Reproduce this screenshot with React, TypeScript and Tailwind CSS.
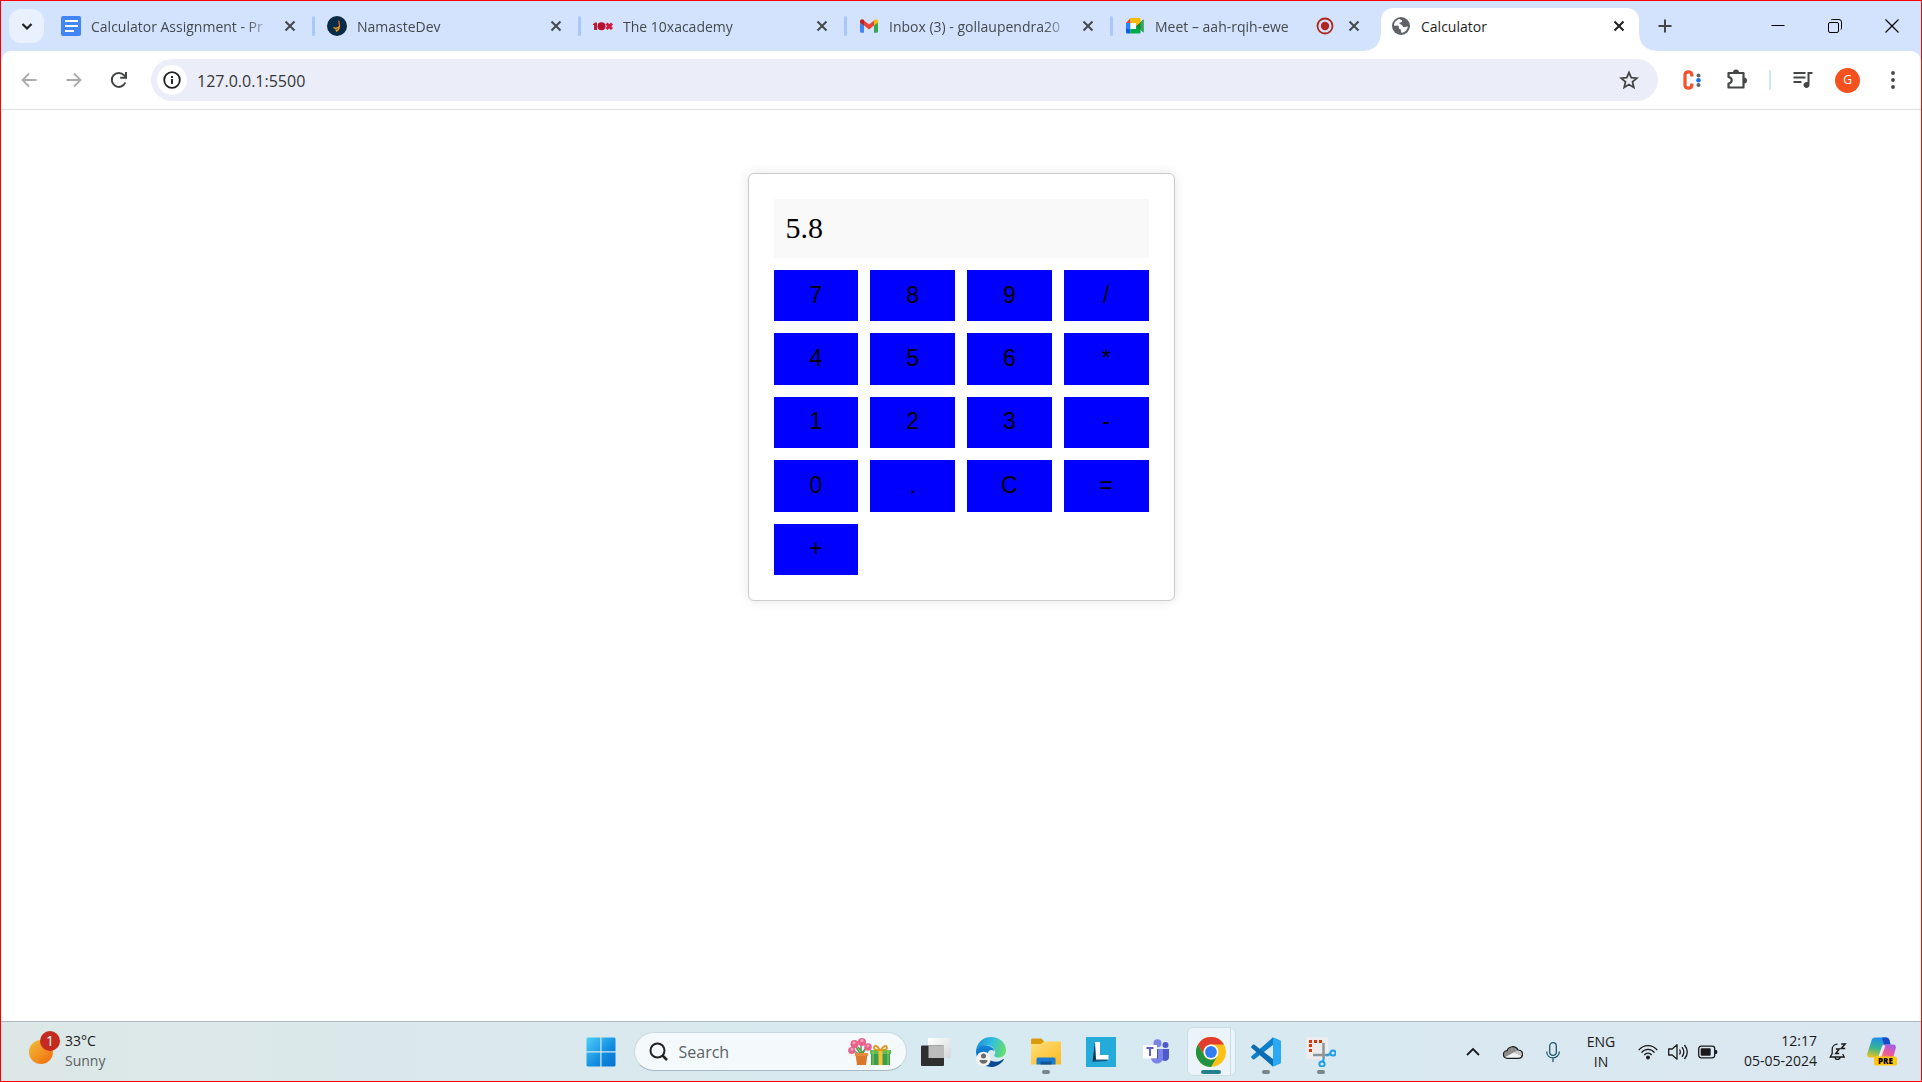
import React, { useState } from "react";

type IconProps = { className?: string };

/* ---------- Tab favicons ---------- */

const DocsIcon = () => (
  <svg viewBox="0 0 20 20" className="size-5 shrink-0" aria-hidden="true">
    <rect width="20" height="20" rx="2" fill="#4285f4" />
    <path d="M4 5h13M4 10h13M4 15h9" stroke="#fff" strokeWidth="2.2" />
  </svg>
);

const NamasteIcon = () => (
  <svg viewBox="0 0 20 20" className="size-5 shrink-0" aria-hidden="true">
    <circle cx="10" cy="10" r="10" fill="#0a2b45" />
    <path d="M12 4.500c-.6 2 1 4 .4 6" stroke="#e0643c" strokeWidth="1.300" fill="none" />
    <path d="M6.500 11.500c2 1.300 4 .8 5.800-.8-.1 1.800-.8 3-2 4" stroke="#f39a1f" strokeWidth="1.400" fill="none" />
    <path d="M8 13.500l3.600.2-2 2.200z" fill="#f5a623" />
  </svg>
);

const TenXIcon = () => (
  <svg viewBox="0 0 20 20" className="size-5 shrink-0" aria-hidden="true">
    <path d="M0 8l2-1.500h2V14H1V9H0z" fill="#c01c3a" />
    <circle cx="8.500" cy="10.200" r="4" fill="#b8102f" />
    <path d="M13.500 7.500l5.500 5.500M19 7.500L13.500 13" stroke="#d0183a" strokeWidth="3" />
  </svg>
);

const GmailIcon = () => (
  <svg viewBox="0 0 20 20" className="size-5 shrink-0" aria-hidden="true">
    <path d="M1 6v9.500c0 .8.500 1.200 1.200 1.200H5V8.500z" fill="#4285f4" />
    <path d="M19 6v9.500c0 .8-.500 1.200-1.200 1.200H15V8.500z" fill="#34a853" />
    <path d="M5 4.600l5 3.800 5-3.800v5L10 13.400 5 9.600z" fill="#ea4335" />
    <path d="M1 5.300C1 3.300 3.200 2.600 4.600 3.700L5 4v5.600L1 6.600z" fill="#c5221f" />
    <path d="M19 5.300c0-2-2.200-2.700-3.600-1.600L15 4v5.600l4-3z" fill="#fbbc04" />
  </svg>
);

const MeetIcon = () => (
  <svg viewBox="0 0 20 20" className="size-5 shrink-0" aria-hidden="true">
    <path d="M1 7h4.500v6H1z" fill="#2684fc" />
    <path d="M1 7l4.500-5v5z" fill="#ea4335" />
    <path d="M5.500 2H14c1 0 1.500.5 1.500 1.500V8L11 10V7H5.500z" fill="#ffba00" />
    <path d="M1 13h4.500v4.500H2.500c-1 0-1.500-.5-1.500-1.500z" fill="#0066da" />
    <path d="M5.500 7H11v6H5.500z" fill="#fff" />
    <path d="M5.500 13H11v-3l4.500-2v8c0 1-.5 1.500-1.500 1.500H5.500z" fill="#00ac47" />
    <path d="M11.500 10l7-6.500v13z" fill="#188038" />
    <path d="M15.500 6.300l3-2.800v13l-3-2.800z" fill="#34a853" />
  </svg>
);

const GlobeIcon = () => (
  <svg viewBox="0 0 20 20" className="size-5 shrink-0" aria-hidden="true">
    <circle cx="10" cy="10" r="9" fill="#5f6368" />
    <path d="M3 9.500C3.200 6 5.500 3.600 8.800 3c.8 1.200 2.700 1 2.300 2.400-.3 1.100-2.600.8-2.700 2-.1 1 1.500.6 2.500 1.500.9.800.6 2 2 2.200 1.500.3 2.600-.6 4-.6-.4 2.800-2.300 5.200-5.200 6.200l-1.500-.1c-.7-.6.300-1.600-.2-2.500-.5-.9-1.700-.8-2.100-1.800-.4-1.200.5-2-.6-2.600C6 9.100 4.600 10.400 3 9.500z" fill="#fff" />
  </svg>
);

const CloseX = ({ className = "" }: IconProps) => (
  <svg viewBox="0 0 20 20" className={`size-5 ${className}`} aria-hidden="true">
    <path d="M5.500 5.500l9 9M14.500 5.500l-9 9" stroke="currentColor" strokeWidth="2" />
  </svg>
);

/* ---------- Browser chrome ---------- */

type TabProps = { title: string; icon: React.ReactNode; recording?: boolean };

const Tab = ({ title, icon, recording }: TabProps) => (
  <div className="flex w-[266px] shrink-0 items-center pl-3 text-[#45494e]">
    {icon}
    <a
      href="#"
      className="ml-2.5 flex-1 overflow-hidden pt-0.5 text-sm/5 whitespace-nowrap [mask-image:linear-gradient(to_right,black_86%,transparent)]"
    >
      {title}
    </a>
    {recording && (
      <svg viewBox="0 0 18 18" className="mr-2.5 size-[18px]" role="img" aria-label="Recording">
        <circle cx="9" cy="9" r="7.500" fill="none" stroke="#b3261e" strokeWidth="1.800" />
        <circle cx="9" cy="9" r="4.200" fill="#b3261e" />
      </svg>
    )}
    <button aria-label={`Close ${title}`} className={recording ? "" : "ml-2"}>
      <CloseX />
    </button>
    <span className="ml-3 h-5 w-[3px] rounded-full bg-[#a8c7fa]" />
  </div>
);

const TabStrip = () => (
  <header className="flex h-[50px] items-stretch bg-[#d3e3fd]">
    <button
      aria-label="Search tabs"
      className="my-2 mr-[5px] ml-2 flex w-[35px] shrink-0 items-center justify-center rounded-xl bg-[#e9f1fe] text-[#1f1f1f]"
    >
      <svg viewBox="0 0 20 20" className="size-5" aria-hidden="true">
        <path d="M5.500 8l4.500 4.500L14.500 8" fill="none" stroke="currentColor" strokeWidth="2.200" />
      </svg>
    </button>
    <nav className="flex min-w-0" aria-label="Tabs">
      <Tab title="Calculator Assignment - Pr" icon={<DocsIcon />} />
      <Tab title="NamasteDev" icon={<NamasteIcon />} />
      <Tab title="The 10xacademy" icon={<TenXIcon />} />
      <Tab title="Inbox (3) - gollaupendra20" icon={<GmailIcon />} />
      <div className="flex [&>div>span:last-child]:bg-transparent">
        <Tab title="Meet – aah-rqih-ewe" icon={<MeetIcon />} recording />
      </div>
      <div className="relative mt-[7px] ml-0.5 flex w-[258px] shrink-0 items-center rounded-t-xl bg-white pr-2.5 pb-[7px] pl-2.5 text-[#1f1f1f]">
        <span className="absolute bottom-0 -left-4 size-4 bg-[radial-gradient(circle_at_0_0,transparent_15px,white_16px)]" />
        <span className="absolute -right-4 bottom-0 size-4 bg-[radial-gradient(circle_at_100%_0,transparent_15px,white_16px)]" />
        <GlobeIcon />
        <a href="#" className="ml-2.5 flex-1 pt-0.5 text-sm/5">
          Calculator
        </a>
        <button aria-label="Close Calculator">
          <CloseX />
        </button>
      </div>
    </nav>
    <button aria-label="New tab" className="ml-3 flex w-7 items-center justify-center text-[#444746]">
      <svg viewBox="0 0 16 16" className="size-4" aria-hidden="true">
        <path d="M8 1.500v13M1.500 8h13" stroke="currentColor" strokeWidth="2" />
      </svg>
    </button>
    <div className="ml-auto flex pr-px text-black">
      <button aria-label="Minimize" className="flex w-[57px] items-center justify-center">
        <svg viewBox="0 0 14 14" className="size-3.5" aria-hidden="true">
          <path d="M.500 6.500h13" stroke="currentColor" />
        </svg>
      </button>
      <button aria-label="Restore" className="flex w-[57px] items-center justify-center">
        <svg viewBox="0 0 14 14" className="size-3.5" fill="none" stroke="currentColor" aria-hidden="true">
          <rect x=".500" y="3.500" width="10" height="10" rx="1.500" />
          <path d="M3 1c.4-.4.8-.5 1.500-.5H11A2.500 2.500 0 0 1 13.500 3v6c0 .8-.2 1.200-.6 1.600" />
        </svg>
      </button>
      <button aria-label="Close window" className="flex w-[57px] items-center justify-center">
        <svg viewBox="0 0 14 14" className="size-3.5" aria-hidden="true">
          <path d="M.500.500l13 13M13.500.500l-13 13" stroke="currentColor" strokeWidth="1.200" />
        </svg>
      </button>
    </div>
  </header>
);

const Toolbar = () => (
  <div className="bg-[#d3e3fd]">
    <div className="flex h-[59px] items-center rounded-t-[10px] border-b border-[#dee1e3] bg-white pr-1.5 pl-[5px] text-[#444746]">
      <button aria-label="Back" className="flex w-[45px] shrink-0 justify-center text-[#a9abab]">
        <svg viewBox="0 0 16 16" className="size-4" fill="none" stroke="currentColor" strokeWidth="1.800" aria-hidden="true">
          <path d="M15.500 8H2M8 1.500L1.500 8 8 14.500" />
        </svg>
      </button>
      <button aria-label="Forward" className="flex w-[45px] shrink-0 justify-center text-[#a9abab]">
        <svg viewBox="0 0 16 16" className="size-4" fill="none" stroke="currentColor" strokeWidth="1.800" aria-hidden="true">
          <path d="M.500 8H14M8 1.500L14.500 8 8 14.500" />
        </svg>
      </button>
      <button aria-label="Reload" className="flex w-[45px] shrink-0 justify-center">
        <svg viewBox="0 0 18 18" className="size-[18px]" fill="none" stroke="currentColor" strokeWidth="2" aria-hidden="true">
          <path d="M15.300 11.500A7 7 0 1 1 14 4.200l2 2" />
          <path d="M16 1v5.800h-5.800" />
        </svg>
      </button>
      <div className="ml-2.5 flex h-[42px] flex-1 items-center rounded-full bg-[#ebeef8] pr-[19px] pl-1.5">
        <button aria-label="View site information" className="flex size-[30px] items-center justify-center rounded-full bg-white text-[#1f1f1f]">
          <svg viewBox="0 0 18 18" className="size-[18px]" aria-hidden="true">
            <circle cx="9" cy="9" r="7.800" fill="none" stroke="currentColor" strokeWidth="1.800" />
            <path d="M9 8v5M9 5v2" stroke="currentColor" strokeWidth="1.900" />
          </svg>
        </button>
        <input
          aria-label="Address bar"
          defaultValue="127.0.0.1:5500"
          className="ml-2.5 min-w-0 flex-1 bg-transparent pt-0.5 text-base text-[#33363a] outline-none"
        />
        <button aria-label="Bookmark this tab">
          <svg viewBox="0 0 20 20" className="size-5" fill="none" stroke="currentColor" strokeWidth="1.800" aria-hidden="true">
            <path d="M10 2.500l2.200 5.200 5.600.5-4.300 3.700 1.300 5.500L10 14.500l-4.800 2.900 1.300-5.500L2.200 8.200l5.600-.5z" />
          </svg>
        </button>
      </div>
      <div className="flex items-center">
        <button aria-label="Extension" className="ml-[11px] flex w-[45px] justify-center">
          <svg viewBox="0 0 20 20" className="size-5" aria-hidden="true">
            <path d="M9.800 6.500V5c0-2-1.200-3.200-3.300-3.200S3 3 3 5v10c0 2 1.300 3.200 3.500 3.200s3.300-1.200 3.300-3.200v-1.500" fill="none" stroke="#f4512c" strokeWidth="3.200" />
            <circle cx="16.500" cy="5.500" r="2" fill="#5f6368" />
            <circle cx="16.500" cy="10.200" r="2.300" fill="#1a73e8" />
            <circle cx="16.500" cy="15" r="2" fill="#5f6368" />
          </svg>
        </button>
        <button aria-label="Extensions" className="flex w-[45px] justify-center">
          <svg viewBox="0 0 22 22" className="size-[22px]" aria-hidden="true">
            <path d="M2.500 4h15v14.500h-15v-4a3.200 3.200 0 0 0 0-6.400z" fill="none" stroke="currentColor" strokeWidth="2.200" strokeLinejoin="round" />
            <path d="M7 3.500a3 3 0 0 1 6 0zM18 8.500a3 3 0 0 1 0 6z" fill="currentColor" />
          </svg>
        </button>
        <span className="mr-[9px] ml-[10px] h-5 w-0.5 bg-[#d3e3fd]" />
        <button aria-label="Media controls" className="flex w-[45px] justify-center">
          <svg viewBox="2.500 3 20 18" className="h-[18px] w-5" fill="currentColor" aria-hidden="true">
            <path d="M15 4H3v2h12V4zm0 4.500H3v2h12v-2zM3 15h8v-2H3v2zM17 4v10.180c-.31-.11-.65-.18-1-.18-1.660 0-3 1.340-3 3s1.340 3 3 3 3-1.340 3-3V6h3V4h-5z" />
          </svg>
        </button>
        <button aria-label="Profile" className="flex w-[45px] justify-center">
          <span className="flex size-[25px] items-center justify-center rounded-full bg-[#f4511e] text-xs text-white">G</span>
        </button>
        <button aria-label="Menu" className="flex w-[45px] justify-center">
          <svg viewBox="0 0 18 18" className="size-[18px]" fill="currentColor" aria-hidden="true">
            <circle cx="9" cy="2" r="1.900" />
            <circle cx="9" cy="9" r="1.900" />
            <circle cx="9" cy="16" r="1.900" />
          </svg>
        </button>
      </div>
    </div>
  </div>
);

/* ---------- Calculator ---------- */

const KEYS = ["7", "8", "9", "/", "4", "5", "6", "*", "1", "2", "3", "-", "0", ".", "C", "=", "+"];

const evaluate = (expression: string): string => {
  const tokens = expression.match(/\d*\.?\d+|[-+*/]/g) ?? [];
  const terms: number[] = [];
  let operator = "+";
  for (const token of tokens) {
    if (/^[-+*/]$/.test(token)) {
      operator = token;
      continue;
    }
    const value = Number(token);
    if (operator === "*") terms.push((terms.pop() ?? 0) * value);
    else if (operator === "/") terms.push((terms.pop() ?? 0) / value);
    else terms.push(operator === "-" ? -value : value);
  }
  return String(terms.reduce((sum, term) => sum + term, 0));
};

const Calculator = () => {
  const [display, setDisplay] = useState("5.8");

  const press = (key: string) => {
    if (key === "C") setDisplay("");
    else if (key === "=") setDisplay(evaluate(display));
    else setDisplay(display + key);
  };

  return (
    <section
      aria-label="Calculator"
      className="mt-[63px] w-full max-w-[427px] rounded-md border border-[#ccc] bg-white p-[25px] shadow-[0_0_12px_rgba(0,0,0,0.1)]"
    >
      <output className="mb-3 block min-h-[59px] bg-[#f9f9f9] px-3 py-3 font-['Liberation_Serif',serif] text-[30px]/[33px] text-black">
        {display}
      </output>
      <div className="grid h-[305px] grid-cols-4 grid-rows-5 gap-3">
        {KEYS.map((key) => (
          <button
            key={key}
            onClick={() => press(key)}
            className="bg-[#0000ff] pb-0.5 font-['Liberation_Sans',sans-serif] text-[23px]/[26px] text-black"
          >
            {key}
          </button>
        ))}
      </div>
    </section>
  );
};

/* ---------- Taskbar icons ---------- */

const StartIcon = () => (
  <svg viewBox="0 0 30 30" className="size-[30px]" aria-hidden="true">
    <defs>
      <linearGradient id="start" x1="0" y1="0" x2="1" y2="1">
        <stop offset="0" stopColor="#4fd0fb" />
        <stop offset=".6" stopColor="#118be0" />
        <stop offset="1" stopColor="#0573cf" />
      </linearGradient>
    </defs>
    <path d="M1.500.500H14.300V14.300H.500V1.500zM15.500.500H28.500l1 1V14.300H15.500zM.500 15.500H14.300V29.500H1.500l-1-1zM15.500 15.500H29.500V28.500l-1 1H15.500z" fill="url(#start)" />
  </svg>
);

const GiftIcon = () => (
  <svg viewBox="0 0 44 28" className="h-7 w-11" aria-hidden="true">
    <path d="M8 9l5 8M19 8l-5 9M13 5v12M5 12l7 5M10 9l4 5M17 11l-3 4" stroke="#5a9a4a" strokeWidth="1.500" />
    <path d="M7.500 16h12l-1.500 11H9z" fill="#d9772b" />
    <path d="M7 15h13v3H7z" fill="#e88a3c" />
    <g fill="#e9608c">
      <circle cx="14" cy="4" r="4" />
      <circle cx="6.500" cy="6" r="4" />
      <circle cx="20" cy="9" r="3.800" />
      <circle cx="3.800" cy="12.500" r="3.600" />
    </g>
    <g fill="#f7a5bf">
      <circle cx="14" cy="2.500" r="1.600" />
      <circle cx="6" cy="4.800" r="1.500" />
      <circle cx="20" cy="7.800" r="1.400" />
      <circle cx="4" cy="11.500" r="1.400" />
    </g>
    <path d="M23 15h19v12H23z" fill="#3d9e49" />
    <path d="M22 12h21v4H22z" fill="#62bb55" />
    <path d="M25 12v15M40 12v15" stroke="#8bd06c" />
    <path d="M30.500 12h4v15h-4z" fill="#f5c33b" />
    <path d="M32 12c-3-5-6-5-6-2 0 1.500 3 2 6 2zM33 12c3-5 6-5 6-2 0 1.500-3 2-6 2z" fill="none" stroke="#dc9a20" strokeWidth="1.800" />
  </svg>
);

const TaskViewIcon = () => (
  <svg viewBox="0 0 30 28" className="h-7 w-[30px]" aria-hidden="true">
    <defs>
      <linearGradient id="tv" x1="0" y1="0" x2="1" y2="1">
        <stop offset="0" stopColor="#fff" />
        <stop offset="1" stopColor="#d5d7d8" />
      </linearGradient>
    </defs>
    <rect x="7" width="23" height="20" rx="1" fill="url(#tv)" />
    <rect y="7.500" width="23" height="20.500" rx="1" fill="#2f2f2f" />
    <path d="M7.500 7.500H23V20H7.500z" fill="#bcbcbc" />
  </svg>
);

const EdgeIcon = () => (
  <svg viewBox="0 0 30 30" className="size-[30px]" aria-hidden="true">
    <defs>
      <linearGradient id="edgeTop" x1="0" y1=".3" x2="1" y2=".5">
        <stop offset="0" stopColor="#1b8fd8" />
        <stop offset=".5" stopColor="#30bfe0" />
        <stop offset="1" stopColor="#66dd6a" />
      </linearGradient>
      <linearGradient id="edgeBody" x1="0" y1="0" x2="0" y2="1">
        <stop offset="0" stopColor="#1486d8" />
        <stop offset="1" stopColor="#0a5cad" />
      </linearGradient>
    </defs>
    <path d="M0 14C.6 6 7 0 15 0c8.500 0 15 6 15 13 0 5-3.500 7.500-7.500 7.500-3 0-5-1.300-4-3 .7-1 .8-2 .5-3C18 10 13 7.500 8.500 8.500 4.500 9.200 1.500 11 0 14z" fill="url(#edgeTop)" />
    <path d="M0 14c1.500-4 6-6.500 11-5.500 4 .7 7 3 7.300 5.500-3-2-6.800-.8-6.800 4 0 5 4 9 9 9-2 2-4.500 3-7 2.700C6 29 0 23 0 14z" fill="url(#edgeBody)" />
    <path d="M11.500 18c0 5 5.500 7.500 10.500 6.500 2-.4 3.800-1.300 5-2.300.6-.4 1 .1.600.7C24.500 27.500 19.500 30 14.500 30c-2.500-2-4-7-3-12z" fill="#0c4a90" />
    <circle cx="7.500" cy="22" r="7.300" fill="#f3f3f3" />
    <circle cx="7.500" cy="19" r="2.500" fill="#6b6b6b" />
    <path d="M3.500 23h8c0 5-8 5-8 0z" fill="#6b6b6b" />
  </svg>
);

const FolderIcon = () => (
  <svg viewBox="0 0 30 28" className="h-7 w-[30px]" aria-hidden="true">
    <defs>
      <linearGradient id="folder" x1="0" y1="0" x2="1" y2="1">
        <stop offset="0" stopColor="#ffe07a" />
        <stop offset="1" stopColor="#fbb921" />
      </linearGradient>
    </defs>
    <path d="M0 2C0 1 .6.500 1.500.500h9L13.500 4v4H0z" fill="#d99b0b" />
    <path d="M0 6h10l3-2.500h16c.6 0 1 .4 1 1V26.500H0z" fill="url(#folder)" />
    <path d="M5.500 21.500c0-1.500.8-2 2-2h15c1.200 0 2 .5 2 2v5h-19z" fill="#1a7bd0" />
    <path d="M9.500 23.500h11v3h-11z" fill="#0f5596" />
  </svg>
);

const LIcon = () => (
  <svg viewBox="0 0 30 30" className="size-[30px]" aria-hidden="true">
    <path d="M0 0h30v30H0z" fill="#25abd9" />
    <path d="M9 5L6.500 25l5-3z" fill="#10304f" />
    <path d="M6.500 25l5-4H22l-1 3z" fill="#1a5a80" />
    <path d="M9 5h5v13h8.500v4.500H10z" fill="#fff" />
  </svg>
);

const TeamsIcon = () => (
  <svg viewBox="0 0 28 26" className="h-[26px] w-7" aria-hidden="true">
    <circle cx="23.500" cy="6" r="3" fill="#5059c9" />
    <circle cx="15.500" cy="4.200" r="4" fill="#7b83eb" />
    <path d="M18 10h9v8c0 4-5 5.500-8 2z" fill="#5059c9" />
    <path d="M9 10h12v8c0 4-2.500 6.500-6 6.500S9 22 9 18z" fill="#7b83eb" />
    <path d="M9 10h7v10H9z" fill="#4b53a8" />
    <rect x="1" y="6" width="14" height="13.500" fill="#fff" />
    <path d="M4.500 9h7M8 9v8" stroke="#5b5fc7" strokeWidth="2" />
  </svg>
);

const ChromeIcon = () => (
  <svg viewBox="0 0 30 30" className="size-[30px]" aria-hidden="true">
    <circle cx="15" cy="15" r="15" fill="#fbc116" />
    <path d="M2 7.500A15 15 0 0 1 28 7.500H15a7.500 7.500 0 0 0-6.500 11.200z" fill="#e33b2e" />
    <path d="M2 7.500l6.500 11.200A7.500 7.500 0 0 0 21.500 18.700L15 30A15 15 0 0 1 2 7.500z" fill="#229342" />
    <circle cx="15" cy="15" r="7.500" fill="#fff" />
    <circle cx="15" cy="15" r="5.900" fill="#2f7df0" />
  </svg>
);

const VsCodeIcon = () => (
  <svg viewBox="0 0 30 30" className="size-[30px]" aria-hidden="true">
    <path d="M22 8L3.500 22.300c-.5.400-1 .3-1.500 0L.4 20.800c-.5-.5-.5-1.100 0-1.600L22 .3z" fill="#0e7fcb" />
    <path d="M22 22L3.500 7.700c-.5-.4-1-.3-1.500 0L.4 9.200c-.5.500-.5 1.100 0 1.600L22 29.700z" fill="#0b6cb4" />
    <path d="M22 .2l7 3c.6.300 1 .8 1 1.500v20.600c0 .7-.4 1.200-1 1.500l-7 3c-.2 0 .2-.6 0-1V1.200c0-.4.200-1 0-1z" fill="#2aa8f2" />
  </svg>
);

const SnipIcon = () => (
  <svg viewBox="0 0 30 30" className="size-[30px]" aria-hidden="true">
    <rect width="22" height="22" rx="2" fill="#ececec" />
    <path d="M3 4.500h13M4.500 7v9" stroke="#d4380d" strokeWidth="3" strokeDasharray="3 2" />
    <path d="M17.500 6v15M7 18h16" stroke="#8d949a" strokeWidth="2.500" />
    <g fill="none" stroke="#1f9fe0" strokeWidth="2">
      <circle cx="27" cy="16" r="2.600" />
      <circle cx="16" cy="27" r="2.600" />
      <path d="M24.500 17l-4 1.500M17 24.500l1-4" />
    </g>
  </svg>
);

const CopilotIcon = () => (
  <svg viewBox="0 0 30 29" className="h-[29px] w-[30px]" role="img" aria-label="Copilot preview">
    <defs>
      <linearGradient id="copA" x1=".3" y1="0" x2=".1" y2="1">
        <stop offset="0" stopColor="#1a8ff0" />
        <stop offset=".5" stopColor="#3bb58c" />
        <stop offset="1" stopColor="#f5c518" />
      </linearGradient>
      <linearGradient id="copB" x1=".8" y1="0" x2=".2" y2="1">
        <stop offset="0" stopColor="#a05cf0" />
        <stop offset=".6" stopColor="#ee5a98" />
        <stop offset="1" stopColor="#fb8a5a" />
      </linearGradient>
    </defs>
    <path d="M8 .500h11c2 0 3 1 3.500 3l1 4H18c-2 0-3 1-3.500 3L12 18.500c-.4 1.500-1 2-2.500 2H3c-2 0-3.500-1.500-2.700-4L4.500 3.500C5 1.500 6 .500 8 .500z" fill="url(#copA)" />
    <path d="M15 .500h4c2 0 3 1 3.500 3l1 4H17z" fill="#1b49c8" />
    <path d="M19 7.500h7c2 0 3.500 1.500 2.700 4L26 21H11c2-1 2.500-2 3-3.500l2.500-8c.4-1.300 1-2 2.500-2z" fill="url(#copB)" />
    <path d="M16.500 8.500h2l-4 11h-3z" fill="#fff" opacity=".75" />
    <rect x="7" y="19.500" width="23" height="9" rx="2" fill="#ffc60a" />
    <text x="18.500" y="27" textAnchor="middle" className="font-['Open_Sans',sans-serif] text-[8px] font-extrabold">
      PRE
    </text>
  </svg>
);

/* ---------- Taskbar ---------- */

type AppButtonProps = { label: string; children: React.ReactNode; running?: boolean; active?: boolean };

const AppButton = ({ label, children, running, active }: AppButtonProps) => (
  <button aria-label={label} className="relative flex w-[55px] items-center justify-center">
    {active && (
      <span className="absolute inset-x-[3px] inset-y-[5px] rounded-md border border-[#cbdbe3] bg-[#eaf4fa]">
        <span className="absolute inset-y-0 right-1 border-r border-[#cbdbe3]" />
      </span>
    )}
    <span className="relative">{children}</span>
    {running && <span className="absolute bottom-[7px] h-1 w-2 rounded-full bg-[#79868b]" />}
    {active && <span className="absolute bottom-[7px] h-1 w-5 rounded-full bg-[#23808d]" />}
  </button>
);

const Taskbar = () => (
  <footer className="flex h-[60px] items-stretch border-t border-[#a9b9be] bg-linear-to-r from-[#dde7e7] via-[#d7eaf1] to-[#dbe7f0] px-3.5 text-[#1b1b1b]">
    <div className="flex flex-1 items-stretch">
      <button className="flex items-center pl-3.5 text-left">
        <span className="relative mr-3 size-6 rounded-full bg-linear-to-br from-[#eebd35] to-[#f2660c]">
          <span className="absolute -top-[9px] left-[11px] flex size-5 items-center justify-center rounded-full bg-[#c42b1c] text-sm text-white">
            1
          </span>
        </span>
        <span className="flex flex-col pb-0.5 text-sm/5">
          <span>33°C</span>
          <span className="text-[#5b6265]">Sunny</span>
        </span>
      </button>
    </div>
    <div className="flex shrink-0 items-stretch">
      <AppButton label="Start">
        <StartIcon />
      </AppButton>
      <label className="mr-0.5 ml-[5px] flex h-[39px] w-[273px] items-center self-center rounded-full border border-[#c9d8e0] border-b-[#a6b8c2] bg-[#f4f9fb] pr-3.5 pl-3.5">
        <svg viewBox="0 0 20 20" className="size-5 shrink-0" fill="none" stroke="#222" aria-hidden="true">
          <circle cx="8.500" cy="8.500" r="7" strokeWidth="2" />
          <path d="M13.500 13.500l4.500 4.500" strokeWidth="2.500" />
        </svg>
        <input
          aria-label="Search"
          placeholder="Search"
          className="ml-2.5 min-w-0 flex-1 bg-transparent text-base outline-none placeholder:text-[#5c6164]"
        />
        <GiftIcon />
      </label>
      <AppButton label="Task view">
        <TaskViewIcon />
      </AppButton>
      <AppButton label="Edge">
        <EdgeIcon />
      </AppButton>
      <AppButton label="File Explorer" running>
        <FolderIcon />
      </AppButton>
      <AppButton label="L app">
        <LIcon />
      </AppButton>
      <AppButton label="Teams">
        <TeamsIcon />
      </AppButton>
      <AppButton label="Chrome" active>
        <ChromeIcon />
      </AppButton>
      <AppButton label="Visual Studio Code" running>
        <VsCodeIcon />
      </AppButton>
      <AppButton label="Snipping Tool" running>
        <SnipIcon />
      </AppButton>
    </div>
    <div className="flex flex-1 items-stretch justify-end">
      <button aria-label="Show hidden icons" className="flex w-10 items-center justify-center">
        <svg viewBox="0 0 14 14" className="size-3.5" fill="none" stroke="currentColor" strokeWidth="1.800" aria-hidden="true">
          <path d="M1 10l6-6 6 6" />
        </svg>
      </button>
      <button aria-label="OneDrive" className="flex w-10 items-center justify-center">
        <svg viewBox="0 0 20 14" className="h-3.5 w-5" aria-hidden="true">
          <path d="M4.500 13.300A3.800 3.800 0 0 1 4 5.700 6 6 0 0 1 15 5c3 0 4.500 2 4.500 4.300S18 13.300 15.500 13.300z" fill="#8c8c8c" />
          <path d="M2 12.300l9-5 8 4c-.7 1.300-2 2-3.500 2h-11c-1 0-1.900-.4-2.500-1z" fill="#f1f1f1" />
          <path d="M11 7.300L15 5c3 0 4.500 2.500 4 6.300z" fill="#c9c9c9" />
          <path d="M4.500 13.300A3.800 3.800 0 0 1 4 5.700 6 6 0 0 1 15 5c3 0 4.500 2 4.500 4.300S18 13.300 15.500 13.300z" fill="none" stroke="#1b1b1b" strokeWidth="1.200" />
        </svg>
      </button>
      <button aria-label="Microphone in use" className="flex w-10 items-center justify-center text-[#22566b]">
        <svg viewBox="0 0 14 20" className="h-5 w-3.5" fill="none" stroke="currentColor" strokeWidth="1.300" aria-hidden="true">
          <rect x="3.700" y=".700" width="6.600" height="12.600" rx="3.300" />
          <path d="M.700 9.500c0 8.600 12.600 8.600 12.600 0M7 16v4" />
        </svg>
      </button>
      <button className="w-14 text-center text-sm/5">
        ENG
        <br />
        IN
      </button>
      <button aria-label="Network, volume and battery" className="ml-1 flex items-center">
        <span className="flex w-[30px] justify-center">
          <svg viewBox="0 0 20 16" className="h-4 w-5" fill="none" stroke="currentColor" strokeWidth="1.300" aria-hidden="true">
            <path d="M.700 6.200c5-6.200 13.600-6.200 18.600 0M3.500 8.700c3.500-4.400 9.500-4.400 13 0M6.300 11c2-2.500 5.400-2.500 7.400 0" />
            <circle cx="10" cy="13.500" r="1.300" fill="currentColor" />
          </svg>
        </span>
        <span className="flex w-[30px] justify-center">
          <svg viewBox="0 0 20 18" className="h-[18px] w-5" fill="none" stroke="currentColor" strokeWidth="1.300" aria-hidden="true">
            <path d="M.700 6h3.500L9 1.800v14.400L4.200 12H.700z" strokeLinejoin="round" />
            <path d="M11.500 6.500c1 1.500 1 3.500 0 5M14 4.200c2.300 3 2.300 6.600 0 9.600M16.500 2c3.600 4.500 3.600 9.500 0 14" />
          </svg>
        </span>
        <span className="flex w-[30px] justify-center">
          <svg viewBox="0 0 20 14" className="h-3.5 w-5" aria-hidden="true">
            <rect x=".700" y="1.200" width="16" height="11.600" rx="2.500" fill="none" stroke="currentColor" strokeWidth="1.300" />
            <rect x="2.700" y="3.200" width="10" height="7.600" rx="1" fill="currentColor" />
            <path d="M17 5h1.500c1 0 1 4 0 4H17z" fill="currentColor" />
          </svg>
        </span>
      </button>
      <button className="ml-4 flex items-center text-right">
        <span className="min-w-[78px] pb-0.5 text-sm/5">
          12:17
          <br />
          05-05-2024
        </span>
        <svg viewBox="0 0 18 18" className="ml-3 size-[18px]" fill="none" stroke="currentColor" strokeWidth="1.300" role="img" aria-label="Notifications snoozed">
          <path d="M8.500 1.200C5 1.200 3.200 3.800 3.200 6.500v4L1.200 14h14l-1.500-3M6 14.200c.3 3 4.800 3 5.200 0" />
          <path d="M6.800 6h3.400l-3.400 4.500h3.400M12.200.9h4L12.200 5.500h4" strokeWidth="1.500" />
        </svg>
      </button>
      <button className="ml-2.5 flex w-[50px] items-center justify-center">
        <CopilotIcon />
      </button>
    </div>
  </footer>
);

export default function App() {
  return (
    <div className="flex min-h-screen flex-col border border-[#ff0000] bg-white font-['Open_Sans',sans-serif]">
      <TabStrip />
      <Toolbar />
      <main className="flex flex-1 items-start justify-center">
        <Calculator />
      </main>
      <Taskbar />
    </div>
  );
}
